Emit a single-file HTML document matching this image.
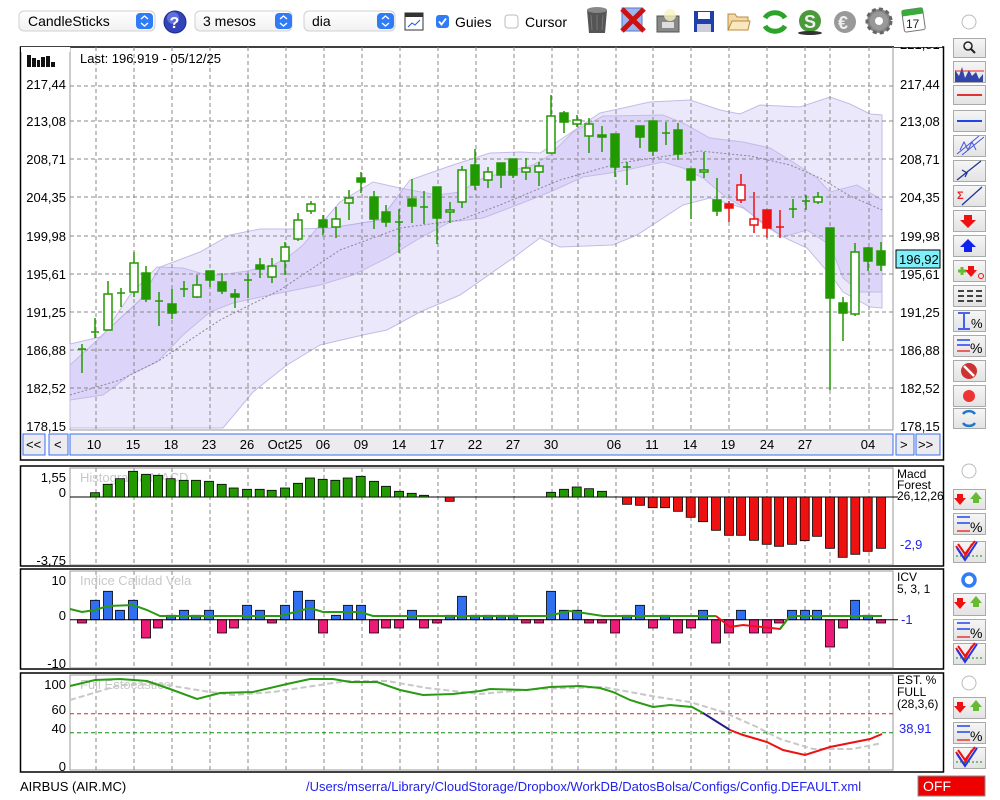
<!DOCTYPE html>
<html><head><meta charset="utf-8"><style>
html,body{margin:0;padding:0;background:#fff;width:1000px;height:800px;overflow:hidden}
svg{display:block;font-family:"Liberation Sans",sans-serif}
</style></head><body>
<svg width="1000" height="800" viewBox="0 0 1000 800" xmlns="http://www.w3.org/2000/svg">
<defs>
<linearGradient id="btn" x1="0" y1="0" x2="0" y2="1"><stop offset="0" stop-color="#f6f6f6"/><stop offset="1" stop-color="#e2e2e2"/></linearGradient>
<linearGradient id="combo" x1="0" y1="0" x2="0" y2="1"><stop offset="0" stop-color="#ffffff"/><stop offset="1" stop-color="#f1f1f1"/></linearGradient>
</defs>
<!-- TOOLBAR -->
<g font-size="14">
<rect x="19" y="11" width="136" height="20" rx="5" fill="url(#combo)" stroke="#d0d0d0"/>
<text x="28" y="26">CandleSticks</text>
<rect x="136" y="13" width="17" height="16" rx="4" fill="#2f7cf6"/><path d="M141 19l3.5-3 3.5 3M141 23l3.5 3 3.5-3" stroke="#fff" stroke-width="1.4" fill="none"/>
<circle cx="175" cy="22" r="11" fill="#3344bb" stroke="#1b2a88"/><circle cx="173" cy="18" r="6" fill="#7f8ff0" opacity=".6"/><text x="169.5" y="28" font-size="16" font-weight="bold" fill="#fff">?</text>
<rect x="195" y="11" width="97" height="20" rx="5" fill="url(#combo)" stroke="#d0d0d0"/>
<text x="203" y="26">3 mesos</text>
<rect x="275" y="13" width="17" height="16" rx="4" fill="#2f7cf6"/><path d="M280 19l3.5-3 3.5 3M280 23l3.5 3 3.5-3" stroke="#fff" stroke-width="1.4" fill="none"/>
<rect x="304" y="11" width="91" height="20" rx="5" fill="url(#combo)" stroke="#d0d0d0"/>
<text x="312" y="26">dia</text>
<rect x="377" y="13" width="17" height="16" rx="4" fill="#2f7cf6"/><path d="M382 19l3.5-3 3.5 3M382 23l3.5 3 3.5-3" stroke="#fff" stroke-width="1.4" fill="none"/>
<rect x="405" y="13" width="18" height="17" fill="#fff" stroke="#333"/><rect x="405" y="13" width="18" height="4" fill="#333"/><path d="M408 27l4-4 3 2 5-5" stroke="#2255dd" fill="none"/>
<rect x="436" y="15" width="13" height="13" rx="3" fill="#2f7cf6"/><path d="M439 21.5l2.5 3 4.5-6" stroke="#fff" stroke-width="1.8" fill="none"/>
<text x="455" y="27">Guies</text>
<rect x="505" y="15" width="13" height="13" rx="3" fill="#fff" stroke="#bbb"/>
<text x="525" y="27">Cursor</text>
<!-- trash -->
<path d="M587 10h20l-2 23h-16z" fill="#555"/><ellipse cx="597" cy="10" rx="10" ry="3" fill="#888"/><path d="M591 15l1 15M597 15v15M603 15l-1 15" stroke="#777"/>
<!-- X -->
<rect x="622" y="8" width="20" height="23" fill="#9db7ee" stroke="#5577cc"/><path d="M622 9l22 22M644 9l-22 22" stroke="#cc1111" stroke-width="5"/>
<!-- camera -->
<rect x="657" y="16" width="22" height="16" fill="#888" stroke="#555"/><circle cx="670" cy="15" r="6" fill="#f8f2c0" opacity=".8"/><rect x="662" y="22" width="12" height="6" fill="#ddd"/>
<!-- floppy -->
<rect x="694" y="11" width="20" height="21" fill="#1f3faa"/><rect x="698" y="12" width="12" height="7" fill="#fff"/><rect x="697" y="24" width="14" height="8" fill="#ccd"/>
<!-- folder -->
<path d="M728 14h7l2 3h11v13h-20z" fill="#f2d9a8" stroke="#b88a40"/><path d="M728 30l4-9h18l-2 9z" fill="#fbe7bd" stroke="#b88a40"/>
<!-- refresh -->
<path d="M765 18a11 9 0 0 1 20 0" stroke="#2aa52a" stroke-width="5" fill="none"/><path d="M765 26a11 9 0 0 0 20 0" stroke="#2aa52a" stroke-width="5" fill="none"/>
<!-- $ -->
<circle cx="810" cy="21" r="11" fill="#4a9a3a"/><text x="804" y="28" font-size="18" font-weight="bold" fill="#eee">S</text><ellipse cx="810" cy="33" rx="12" ry="2" fill="#333"/>
<!-- euro -->
<circle cx="845" cy="22" r="11" fill="#999"/><text x="838" y="29" font-size="18" font-weight="bold" fill="#eee">€</text>
<!-- gear -->
<circle cx="879" cy="21" r="12" fill="#888" stroke="#666" stroke-width="3" stroke-dasharray="4 3"/><circle cx="879" cy="21" r="9" fill="#999"/><circle cx="879" cy="21" r="4" fill="#fff"/>
<!-- calendar -->
<rect x="903" y="9" width="21" height="22" rx="2" fill="#fff" stroke="#777" transform="rotate(-8 913 20)"/><rect x="903" y="9" width="21" height="6" fill="#3aaa3a" transform="rotate(-8 913 20)"/><text x="906" y="28" font-size="12" fill="#222">17</text>
<circle cx="969" cy="22" r="7" fill="#fff" stroke="#bbb"/>
</g>

<!-- MAIN PANEL -->
<rect x="20.5" y="47" width="923" height="413" fill="#fff" stroke="#000" stroke-width="1.5"/>
<line x1="70" y1="47" x2="70" y2="430" stroke="#999"/>
<line x1="893" y1="47" x2="893" y2="430" stroke="#999"/>
<line x1="70" y1="430" x2="893" y2="430" stroke="#999"/>
<!-- bands -->
<polygon fill="rgba(140,120,235,0.17)" stroke="#c4bbe6" stroke-width="1" points="70,344 100,337 140,300 160,267 200,252 230,235 260,229 300,229 330,228 380,220 410,180 450,166 490,153 520,152 540,153 560,140 600,113 650,102 690,100 720,110 740,114 760,105 800,107 830,97 850,104 870,114 882,115 882,308 870,307 843,292 833,278 807,248 783,237 743,208 710,198 683,205 637,235 613,245 560,247 540,238 513,258 460,295 420,312 387,330 363,335 320,345 287,365 253,392 223,428 70,428"/>
<polygon fill="rgba(140,120,235,0.17)" stroke="#c4bbe6" stroke-width="1" points="70,365 103,335 130,295 157,267 183,268 207,275 220,275 247,271 273,265 287,258 303,245 320,225 340,202 373,182 400,188 437,195 460,192 483,178 533,165 550,155 573,132 603,116 663,115 683,123 710,138 743,142 770,148 793,162 817,178 830,192 857,185 882,200 882,292 860,292 843,278 830,245 807,230 783,237 767,227 743,207 727,198 703,178 683,168 663,162 617,172 583,177 550,192 517,205 483,218 450,222 420,238 387,258 353,275 320,285 270,295 233,303 210,312 183,335 157,362 130,375 103,395 70,400"/>
<polyline fill="none" stroke="#8a8499" stroke-dasharray="2 2" points="70,395 120,380 160,360 220,320 280,290 340,250 400,228 460,220 500,205 560,180 620,163 660,157 700,151 750,156 790,165 820,178 850,196 882,210"/>
<!-- grid -->
<g stroke="#888" stroke-dasharray="4 3" stroke-width="1">
<path d="M70 86H893M70 121H893M70 159H893M70 197H893M70 236H893M70 274H893M70 312H893M70 350H893M70 388H893"/>
<path d="M96 47V430M134 47V430M172 47V430M210 47V430M248 47V430M286 47V430M324 47V430M362 47V430M400 47V430M438 47V430M476 47V430M514 47V430M552 47V430M578 47V430M616 47V430M653 47V430M691 47V430M729 47V430M767 47V430M805 47V430M830 47V430M869 47V430"/>
</g>
<!-- candles -->
<g stroke="#229900" stroke-width="1.5" fill="#229900">
<path d="M82 344V373M78 349h8M95 318V338M91 332h8M121 288V307M117 293h8M159 292V326M155 301h8M184 281V297M180 289h8M248 274V298M244 280h8M399 209V253M395 222h8M424 191V224M420 207h8M627 162V185M623 167h8M666 122V145M662 133h8M793 199V218M789 209h8M806 195V210M802 201h8"/>
<path d="M108 281V330M134 252V297M146 266V302M172 289V319M197 275V298M210 271V287M222 273V294M235 289V308M260 258V278M272 258V283M285 242V275M298 213V241M311 201V214M323 215V235M336 207V238M349 190V220M361 172V193M374 191V229M386 205V227M412 179V223M437 187V244M450 202V223M462 166V208M475 149V190M488 167V188M501 163V188M513 159V178M526 158V180M539 162V186M551 95V153M564 111V133M577 115V127M589 118V153M602 126V152M615 134V177M640 126V148M653 121V156M678 123V160M691 169V219M704 152V178M717 178V216M818 192V204M830 228V390M843 297V341M855 243V316M868 247V271M881 242V271"/>
<g fill="#fff"><rect x="104" y="294" width="8" height="36"/><rect x="130" y="263" width="8" height="29"/><rect x="193" y="285" width="8" height="12"/><rect x="268" y="266" width="8" height="11"/><rect x="281" y="247" width="8" height="14"/><rect x="294" y="220" width="8" height="19"/><rect x="307" y="204" width="8" height="7"/><rect x="332" y="219" width="8" height="8"/><rect x="345" y="198" width="8" height="5"/><rect x="446" y="210" width="8" height="2"/><rect x="458" y="170" width="8" height="32"/><rect x="484" y="172" width="8" height="8"/><rect x="522" y="168" width="8" height="4"/><rect x="535" y="166" width="8" height="6"/><rect x="547" y="116" width="8" height="37"/><rect x="573" y="120" width="8" height="4"/><rect x="585" y="124" width="8" height="12"/><rect x="700" y="170" width="8" height="2"/><rect x="814" y="197" width="8" height="5"/><rect x="851" y="252" width="8" height="62"/></g>
<rect x="142" y="273" width="8" height="26"/><rect x="168" y="304" width="8" height="9"/><rect x="206" y="271" width="8" height="9"/><rect x="218" y="282" width="8" height="9"/><rect x="231" y="294" width="8" height="3"/><rect x="256" y="265" width="8" height="4"/><rect x="319" y="220" width="8" height="7"/><rect x="357" y="178" width="8" height="4"/><rect x="370" y="197" width="8" height="22"/><rect x="382" y="212" width="8" height="10"/><rect x="408" y="199" width="8" height="7"/><rect x="433" y="187" width="8" height="31"/><rect x="471" y="165" width="8" height="20"/><rect x="497" y="163" width="8" height="12"/><rect x="509" y="159" width="8" height="16"/><rect x="560" y="113" width="8" height="9"/><rect x="598" y="135" width="8" height="2"/><rect x="611" y="134" width="8" height="33"/><rect x="636" y="126" width="8" height="11"/><rect x="649" y="121" width="8" height="30"/><rect x="674" y="130" width="8" height="24"/><rect x="687" y="169" width="8" height="11"/><rect x="713" y="200" width="8" height="11"/><rect x="826" y="228" width="8" height="70"/><rect x="839" y="303" width="8" height="10"/><rect x="864" y="248" width="8" height="13"/><rect x="877" y="251" width="8" height="14"/>
</g>
<g stroke="#ee1111" stroke-width="1.5" fill="#ee1111">
<path d="M729 201V222M741 174V203M754 192V233M767 210V238M780 210V238M776 227h8"/>
<rect x="725" y="204" width="8" height="4"/><rect x="763" y="210" width="8" height="18"/>
<rect x="737" y="185" width="8" height="15" fill="#fff"/><rect x="750" y="219" width="8" height="6" fill="#fff"/>
</g>
<!-- main labels -->
<g font-size="13" fill="#000">
<text x="80" y="63">Last: 196.919 - 05/12/25</text>
<g text-anchor="end"><text x="66" y="89">217,44</text><text x="66" y="126">213,08</text><text x="66" y="164">208,71</text><text x="66" y="202">204,35</text><text x="66" y="241">199,98</text><text x="66" y="279">195,61</text><text x="66" y="317">191,25</text><text x="66" y="355">186,88</text><text x="66" y="393">182,52</text><text x="66" y="431">178,15</text></g>
<text x="900" y="49">221,81</text><text x="900" y="89">217,44</text><text x="900" y="126">213,08</text><text x="900" y="164">208,71</text><text x="900" y="202">204,35</text><text x="900" y="241">199,98</text><text x="900" y="279">195,61</text><text x="900" y="317">191,25</text><text x="900" y="355">186,88</text><text x="900" y="393">182,52</text><text x="900" y="431">178,15</text>
</g>
<rect x="21" y="47" width="49" height="5" fill="#fff"/><rect x="894" y="38" width="48" height="9" fill="#fff"/>
<rect x="896" y="250" width="44" height="18" fill="#7ff0fa" stroke="#000"/><text x="899" y="264" font-size="13">196,92</text>
<!-- bars icon -->
<g fill="#111"><rect x="27" y="55" width="4" height="12"/><rect x="32" y="58" width="4" height="9"/><rect x="37" y="60" width="3" height="7"/><rect x="41" y="57" width="4" height="10"/><rect x="46" y="56" width="4" height="11"/><rect x="51" y="62" width="4" height="5"/></g>
<!-- date bar -->
<g font-size="13">
<rect x="23" y="434" width="22" height="21" fill="#ebebf0" stroke="#3b6ef0"/><text x="26" y="449">&lt;&lt;</text>
<rect x="49" y="434" width="19" height="21" fill="#ebebf0" stroke="#3b6ef0"/><text x="54" y="449">&lt;</text>
<rect x="70" y="434" width="823" height="21" fill="#ebebf0" stroke="#3b6ef0"/>
<rect x="896" y="434" width="18" height="21" fill="#ebebf0" stroke="#3b6ef0"/><text x="900" y="449">&gt;</text>
<rect x="916" y="434" width="24" height="21" fill="#ebebf0" stroke="#3b6ef0"/><text x="918" y="449">&gt;&gt;</text>
<g text-anchor="middle"><text x="94" y="449">10</text><text x="133" y="449">15</text><text x="171" y="449">18</text><text x="209" y="449">23</text><text x="247" y="449">26</text><text x="285" y="449">Oct25</text><text x="323" y="449">06</text><text x="361" y="449">09</text><text x="399" y="449">14</text><text x="437" y="449">17</text><text x="475" y="449">22</text><text x="513" y="449">27</text><text x="551" y="449">30</text><text x="614" y="449">06</text><text x="652" y="449">11</text><text x="690" y="449">14</text><text x="728" y="449">19</text><text x="767" y="449">24</text><text x="805" y="449">27</text><text x="868" y="449">04</text></g>
</g>

<!-- MACD PANEL -->
<rect x="20.5" y="466" width="923" height="100" fill="#fff" stroke="#000" stroke-width="1.5"/>
<rect x="70" y="468" width="823" height="97" fill="none" stroke="#999"/>
<g stroke="#888" stroke-dasharray="4 3"><path d="M96 468V565M134 468V565M172 468V565M210 468V565M248 468V565M286 468V565M324 468V565M362 468V565M400 468V565M438 468V565M476 468V565M514 468V565M552 468V565M578 468V565M616 468V565M653 468V565M691 468V565M729 468V565M767 468V565M805 468V565M830 468V565M869 468V565"/></g>
<text x="80" y="482" font-size="13" fill="#c8c8c8">Histograma MACD</text>
<line x1="70" y1="497" x2="898" y2="497" stroke="#000"/>
<g fill="#229900" stroke="#000" stroke-width="0.8">
<rect x="90.5" y="492.7" width="9" height="4.3"/><rect x="103.2" y="484.3" width="9" height="12.7"/><rect x="115.5" y="478.7" width="9" height="18.3"/><rect x="128.5" y="471.3" width="9" height="25.7"/><rect x="141.5" y="474.3" width="9" height="22.7"/><rect x="153.5" y="475.3" width="9" height="21.7"/><rect x="166.2" y="478.7" width="9" height="18.3"/><rect x="179.2" y="480.3" width="9" height="16.7"/><rect x="191.5" y="480.3" width="9" height="16.7"/><rect x="204.5" y="481.3" width="9" height="15.7"/><rect x="217.2" y="484.3" width="9" height="12.7"/><rect x="229.2" y="488" width="9" height="9"/><rect x="242.5" y="489.3" width="9" height="7.7"/><rect x="255.2" y="489.3" width="9" height="7.7"/><rect x="267.2" y="490.3" width="9" height="6.7"/><rect x="280.5" y="488" width="9" height="9"/><rect x="293.5" y="483.3" width="9" height="13.7"/><rect x="305.5" y="478" width="9" height="19"/><rect x="318.2" y="479.3" width="9" height="17.7"/><rect x="330.8" y="480.3" width="9" height="16.7"/><rect x="343.2" y="478" width="9" height="19"/><rect x="356.2" y="476.3" width="9" height="20.7"/><rect x="369.5" y="481.3" width="9" height="15.7"/><rect x="381.5" y="486.3" width="9" height="10.7"/><rect x="394.5" y="491.3" width="9" height="5.7"/><rect x="407.2" y="493.3" width="9" height="3.7"/><rect x="419.5" y="495.3" width="9" height="1.7"/>
<rect x="546.5" y="492.3" width="9" height="4.7"/><rect x="559.5" y="489.3" width="9" height="7.7"/><rect x="572.2" y="487" width="9" height="10"/><rect x="584.5" y="488.7" width="9" height="8.3"/><rect x="597.5" y="491.3" width="9" height="5.7"/>
</g>
<g fill="#ee1111" stroke="#000" stroke-width="0.8">
<rect x="445.2" y="497" width="9" height="4.3"/>
<rect x="622.5" y="497" width="9" height="7.3"/><rect x="635.5" y="497" width="9" height="8.3"/><rect x="648.2" y="497" width="9" height="10.7"/><rect x="660.5" y="497" width="9" height="10.7"/><rect x="673.5" y="497" width="9" height="14.3"/><rect x="686.2" y="497" width="9" height="20.3"/><rect x="698.5" y="497" width="9" height="24.7"/><rect x="711.5" y="497" width="9" height="33.3"/><rect x="724.5" y="497" width="9" height="38.3"/><rect x="736.5" y="497" width="9" height="38.3"/><rect x="749.5" y="497" width="9" height="43.3"/><rect x="762.2" y="497" width="9" height="47.3"/><rect x="774.5" y="497" width="9" height="49.3"/><rect x="787.5" y="497" width="9" height="47.3"/><rect x="800.2" y="497" width="9" height="43.7"/><rect x="812.5" y="497" width="9" height="39.3"/><rect x="825.5" y="497" width="9" height="51.3"/><rect x="838.2" y="497" width="9" height="60.3"/><rect x="850.8" y="497" width="9" height="57.3"/><rect x="863.2" y="497" width="9" height="54.3"/><rect x="876.5" y="497" width="9" height="51.3"/>
</g>
<g font-size="13"><g text-anchor="end"><text x="66" y="482">1,55</text><text x="66" y="497">0</text><text x="66" y="565">-3,75</text></g>
<text x="897" y="478" font-size="12">Macd</text><text x="897" y="489" font-size="12">Forest</text><text x="897" y="500" font-size="12">26,12,26</text><text x="900" y="549" fill="#2222ee">-2,9</text></g>

<!-- ICV PANEL -->
<rect x="20.5" y="569" width="923" height="100" fill="#fff" stroke="#000" stroke-width="1.5"/>
<rect x="70" y="571" width="823" height="97" fill="none" stroke="#999"/>
<g stroke="#888" stroke-dasharray="4 3"><path d="M96 571V668M134 571V668M172 571V668M210 571V668M248 571V668M286 571V668M324 571V668M362 571V668M400 571V668M438 571V668M476 571V668M514 571V668M552 571V668M578 571V668M616 571V668M653 571V668M691 571V668M729 571V668M767 571V668M805 571V668M830 571V668M869 571V668"/></g>
<text x="80" y="585" font-size="13" fill="#c8c8c8">Indice Calidad Vela</text>
<g fill="#2f6ff0" stroke="#000" stroke-width="0.8">
<rect x="90.5" y="600.3" width="9" height="19.4"/><rect x="103.5" y="591.3" width="9" height="28.4"/><rect x="115.5" y="610.3" width="9" height="9.4"/><rect x="128.5" y="600.3" width="9" height="19.4"/><rect x="166.5" y="615.3" width="9" height="4.4"/><rect x="179.5" y="610.3" width="9" height="9.4"/><rect x="191.5" y="615.3" width="9" height="4.4"/><rect x="204.5" y="610.3" width="9" height="9.4"/><rect x="242.5" y="605.3" width="9" height="14.4"/><rect x="255.5" y="610.3" width="9" height="9.4"/><rect x="280.5" y="605.3" width="9" height="14.4"/><rect x="293.5" y="591.3" width="9" height="28.4"/><rect x="305.5" y="600.3" width="9" height="19.4"/><rect x="331.5" y="615.3" width="9" height="4.4"/><rect x="343.5" y="605.3" width="9" height="14.4"/><rect x="356.5" y="605.3" width="9" height="14.4"/><rect x="407.5" y="610.3" width="9" height="9.4"/><rect x="445.5" y="615.3" width="9" height="4.4"/><rect x="457.5" y="596.3" width="9" height="23.4"/><rect x="470.5" y="615.3" width="9" height="4.4"/><rect x="483.5" y="615.3" width="9" height="4.4"/><rect x="496.5" y="615.3" width="9" height="4.4"/><rect x="508.5" y="615.3" width="9" height="4.4"/><rect x="546.5" y="591.3" width="9" height="28.4"/><rect x="559.5" y="610.3" width="9" height="9.4"/><rect x="572.5" y="610.3" width="9" height="9.4"/><rect x="622.5" y="615.3" width="9" height="4.4"/><rect x="635.5" y="605.3" width="9" height="14.4"/><rect x="660.5" y="615.3" width="9" height="4.4"/><rect x="698.5" y="610.3" width="9" height="9.4"/><rect x="736.5" y="610.3" width="9" height="9.4"/><rect x="787.5" y="610.3" width="9" height="9.4"/><rect x="800.5" y="610.3" width="9" height="9.4"/><rect x="812.5" y="610.3" width="9" height="9.4"/><rect x="850.5" y="600.3" width="9" height="19.4"/><rect x="863.5" y="615.3" width="9" height="4.4"/>
</g>
<g fill="#ee1a78" stroke="#000" stroke-width="0.8">
<rect x="77.5" y="619.7" width="9" height="3.3"/><rect x="141.5" y="619.7" width="9" height="18.3"/><rect x="153.5" y="619.7" width="9" height="8.3"/><rect x="217.5" y="619.7" width="9" height="13.3"/><rect x="229.5" y="619.7" width="9" height="8.3"/><rect x="267.5" y="619.7" width="9" height="3.3"/><rect x="318.5" y="619.7" width="9" height="13.3"/><rect x="369.5" y="619.7" width="9" height="13.3"/><rect x="381.5" y="619.7" width="9" height="8.3"/><rect x="394.5" y="619.7" width="9" height="8.3"/><rect x="419.5" y="619.7" width="9" height="8.3"/><rect x="432.5" y="619.7" width="9" height="3.3"/><rect x="521.5" y="619.7" width="9" height="3.3"/><rect x="534.5" y="619.7" width="9" height="3.3"/><rect x="584.5" y="619.7" width="9" height="3.3"/><rect x="597.5" y="619.7" width="9" height="3.3"/><rect x="610.5" y="619.7" width="9" height="13.3"/><rect x="648.5" y="619.7" width="9" height="8.3"/><rect x="673.5" y="619.7" width="9" height="13.3"/><rect x="686.5" y="619.7" width="9" height="8.3"/><rect x="711.5" y="619.7" width="9" height="23.3"/><rect x="724.5" y="619.7" width="9" height="13.3"/><rect x="749.5" y="619.7" width="9" height="13.3"/><rect x="762.5" y="619.7" width="9" height="13.3"/><rect x="774.5" y="619.7" width="9" height="3.3"/><rect x="825.5" y="619.7" width="9" height="27.3"/><rect x="838.5" y="619.7" width="9" height="8.3"/><rect x="876.5" y="619.7" width="9" height="3.3"/>
</g>
<line x1="70" y1="619.7" x2="898" y2="619.7" stroke="#000"/>
<polyline fill="none" stroke="#2a9a12" stroke-width="2" points="70,609 82,612 95,610 108,606 133,605 147,610 160,616 280,616 310,608 323,612 360,612 373,616 547,616 570,611 577,612 603,616 716,616"/>
<polyline fill="none" stroke="#ee1111" stroke-width="2" points="716,616 730,627 743,625 780,629 790,616"/>
<polyline fill="none" stroke="#2a9a12" stroke-width="2" points="780,629 790,616 882,616"/>
<g font-size="13"><g text-anchor="end"><text x="66" y="585">10</text><text x="66" y="620">0</text><text x="66" y="668">-10</text></g>
<text x="897" y="581" font-size="12">ICV</text><text x="897" y="593" font-size="12">5, 3, 1</text><text x="901" y="624" fill="#2222ee">-1</text></g>

<!-- EST PANEL -->
<rect x="20.5" y="673" width="923" height="99" fill="#fff" stroke="#000" stroke-width="1.5"/>
<rect x="70" y="675" width="823" height="95" fill="none" stroke="#999"/>
<g stroke="#888" stroke-dasharray="4 3"><path d="M96 675V770M134 675V770M172 675V770M210 675V770M248 675V770M286 675V770M324 675V770M362 675V770M400 675V770M438 675V770M476 675V770M514 675V770M552 675V770M578 675V770M616 675V770M653 675V770M691 675V770M729 675V770M767 675V770M805 675V770M830 675V770M869 675V770"/></g>
<line x1="70" y1="713.7" x2="893" y2="713.7" stroke="#dd2222" stroke-dasharray="4 3"/>
<line x1="70" y1="732.7" x2="893" y2="732.7" stroke="#118811" stroke-dasharray="4 3"/>
<text x="80" y="689" font-size="13" fill="#c8c8c8">Full Estocastico</text>
<polyline fill="none" stroke="#c8c8c8" stroke-width="2" stroke-dasharray="6 3" points="70,700 97,692 120,685 160,684 210,692 233,695 273,692 313,686 347,681 387,681 427,688 480,694 537,689 603,687 630,692 657,697 690,702 723,712 757,727 780,739 813,749 853,749 882,743"/>
<polyline fill="none" stroke="#2a9a12" stroke-width="2" points="70,686 95,680 120,679 147,681 170,689 197,699 220,693 253,692 287,684 310,679 333,679 350,682 377,682 400,690 423,695 453,694 480,691 490,689 527,690 550,687 580,686 600,688 613,692 630,700 653,707 670,705 692,707 703,713"/>
<polyline fill="none" stroke="#222288" stroke-width="2" points="703,713 730,730"/>
<polyline fill="none" stroke="#ee1111" stroke-width="2" points="730,730 743,735 767,742 783,750 805,755 830,747 850,743 870,739 882,734"/>
<g font-size="13"><g text-anchor="end"><text x="66" y="689">100</text><text x="66" y="714">60</text><text x="66" y="733">40</text><text x="66" y="771">0</text></g>
<text x="897" y="684" font-size="12">EST. %</text><text x="897" y="696" font-size="12">FULL</text><text x="897" y="708" font-size="12">(28,3,6)</text><text x="899" y="733" fill="#2222ee">38,91</text></g>

<!-- FOOTER -->
<text x="20" y="791" font-size="13">AIRBUS (AIR.MC)</text>
<text x="306" y="791" font-size="13" fill="#2222ee">/Users/mserra/Library/CloudStorage/Dropbox/WorkDB/DatosBolsa/Configs/Config.DEFAULT.xml</text>
<rect x="918" y="776" width="67" height="20" fill="#ee0000" stroke="#888"/><text x="923" y="791" font-size="14" fill="#fff">OFF</text>

<!-- RIGHT BUTTONS -->
<g stroke="#aaa" fill="url(#btn)">
<rect x="953.5" y="38.5" width="32" height="19"/><rect x="953.5" y="61.5" width="32" height="21"/><rect x="953.5" y="85.5" width="32" height="19"/><rect x="953.5" y="110.5" width="32" height="21"/><rect x="953.5" y="135.5" width="32" height="21"/><rect x="953.5" y="160.5" width="32" height="21"/><rect x="953.5" y="185.5" width="32" height="21"/><rect x="953.5" y="210.5" width="32" height="21"/><rect x="953.5" y="235.5" width="32" height="21"/><rect x="953.5" y="260.5" width="32" height="21"/><rect x="953.5" y="285.5" width="32" height="21"/><rect x="953.5" y="310.5" width="32" height="21"/><rect x="953.5" y="335.5" width="32" height="21"/><rect x="953.5" y="360.5" width="32" height="21"/><rect x="953.5" y="385.5" width="32" height="21"/><rect x="953.5" y="408.5" width="32" height="20"/>
<rect x="953.5" y="489.5" width="32" height="20"/><rect x="953.5" y="513.5" width="32" height="21"/><rect x="953.5" y="541.5" width="32" height="21"/>
<rect x="953.5" y="593.5" width="32" height="22"/><rect x="953.5" y="619.5" width="32" height="21"/><rect x="953.5" y="643.5" width="32" height="21"/>
<rect x="953.5" y="697.5" width="32" height="21"/><rect x="953.5" y="722.5" width="32" height="21"/><rect x="953.5" y="747.5" width="32" height="21"/>
</g>
<!-- icons -->
<circle cx="968" cy="46" r="4" fill="none" stroke="#222" stroke-width="1.5"/><path d="M971 49l4 4" stroke="#222" stroke-width="2"/>
<path d="M955 82V70l4 6 3-9 3 11 4-8 3 6 4-4 3 7 4-5V82z" fill="#3344aa"/><path d="M955 71h29" stroke="#ee2222"/>
<path d="M957 95h25" stroke="#e03333" stroke-width="2"/>
<path d="M957 121h25" stroke="#2244ee" stroke-width="2"/>
<path d="M957 154l22-18M962 155l22-18M960 150l4-8 4 8 4-8 4 8" stroke="#4455dd" fill="none"/>
<path d="M957 180l24-19M962 170l5 3-2 4" stroke="#223399" fill="none" stroke-width="1.3"/>
<text x="957" y="199" font-size="11" fill="#ee2222" font-weight="bold">Σ</text><path d="M962 205l20-18" stroke="#223399" fill="none" stroke-width="1.3"/>
<path d="M964 215h8v5h4l-8 8-8-8h4z" fill="#ee1111"/>
<path d="M968 239l8 8h-4v5h-8v-5h-4z" fill="#1122ee"/>
<path d="M958 271h8M962 267v8" stroke="#66bb33" stroke-width="3"/><path d="M968 266h6v4h3l-6 7-6-7h3z" fill="#ee1111"/><circle cx="981" cy="276" r="2.5" fill="none" stroke="#ee1111"/>
<path d="M958 291h6M967 291h6M976 291h6M958 296h6M967 296h6M976 296h6M958 301h6M967 301h6M976 301h6" stroke="#444" stroke-width="2"/>
<path d="M958 313h12M958 329h12M964 314v14" stroke="#1133ee" stroke-width="1.5"/><text x="971" y="328" font-size="13">%</text>
<path d="M957 340h13M957 345h13" stroke="#2244ee" stroke-width="1.5"/><path d="M957 351h13" stroke="#ee3333" stroke-width="1.5"/><text x="970" y="353" font-size="14">%</text>
<circle cx="969" cy="371" r="8" fill="#cc3333"/><path d="M964 366l10 10" stroke="#fff" stroke-width="2.5"/>
<circle cx="969" cy="396" r="6" fill="#ee3333"/>
<path d="M963 414a7 6 0 0 1 12 0M975 423a7 6 0 0 1-12 0" stroke="#2277cc" stroke-width="2.5" fill="none"/>
<circle cx="969" cy="21" r="0"/>
<!-- lower panel icons -->
<g id="arr"><path d="M957 494h6v4h3l-6 7-6-7h3z" fill="#ee1111"/><path d="M976 492l6 7h-3v4h-6v-4h-3z" fill="#66bb33"/></g>
<path d="M957 517h13M957 523h13" stroke="#2244ee" stroke-width="1.5"/><path d="M957 531h13" stroke="#ee3333" stroke-width="1.5"/><text x="970" y="532" font-size="14">%</text>
<path d="M956 546l8 12 8-14M958 544l7 10 10-13" stroke="#ee1111" stroke-width="2" fill="none"/><path d="M957 548l8 12 12-18" stroke="#2233ee" stroke-width="2" fill="none"/><path d="M956 556h28" stroke="#118811" stroke-dasharray="2 2"/>
<use href="#arr" transform="translate(0,104)"/>
<path d="M957 623h13M957 629h13" stroke="#2244ee" stroke-width="1.5"/><path d="M957 637h13" stroke="#ee3333" stroke-width="1.5"/><text x="970" y="638" font-size="14">%</text>
<path d="M956 648l8 12 8-14M958 646l7 10 10-13" stroke="#ee1111" stroke-width="2" fill="none"/><path d="M957 650l8 12 12-18" stroke="#2233ee" stroke-width="2" fill="none"/><path d="M956 658h28" stroke="#118811" stroke-dasharray="2 2"/>
<use href="#arr" transform="translate(0,208)"/>
<path d="M957 726h13M957 732h13" stroke="#2244ee" stroke-width="1.5"/><path d="M957 740h13" stroke="#ee3333" stroke-width="1.5"/><text x="970" y="741" font-size="14">%</text>
<path d="M956 752l8 12 8-14M958 750l7 10 10-13" stroke="#ee1111" stroke-width="2" fill="none"/><path d="M957 754l8 12 12-18" stroke="#2233ee" stroke-width="2" fill="none"/><path d="M956 762h28" stroke="#118811" stroke-dasharray="2 2"/>
<circle cx="969" cy="471" r="7" fill="#fff" stroke="#bbb"/>
<circle cx="969" cy="580" r="6" fill="#fff" stroke="#2f7cf6" stroke-width="3.5"/>
<circle cx="969" cy="683" r="7" fill="#fff" stroke="#bbb"/>
</svg>
</body></html>
